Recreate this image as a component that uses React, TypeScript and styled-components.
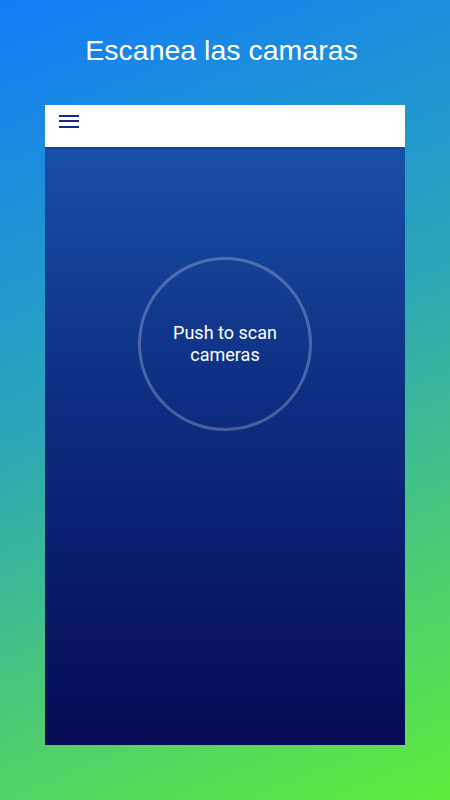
import React from "react";
import styled, { createGlobalStyle } from "styled-components";

const Global = createGlobalStyle`
  html, body { margin: 0; padding: 0; }
  body { width: 450px; height: 800px; overflow: hidden; }
  #root { height: 100%; }
`;

const Page = styled.div`
  width: 450px;
  height: 800px;
  box-sizing: border-box;
  background: linear-gradient(158deg, #117cf7 0%, #2ba6b8 45%, #4fd06c 78%, #5eec3a 100%);
  display: flex;
  flex-direction: column;
  align-items: center;
  padding-top: 33px;
`;

const Title = styled.h1`
  margin: 0;
  padding-right: 7px;
  font-family: "Liberation Sans", Arial, sans-serif;
  font-weight: 400;
  font-size: 28.5px;
  line-height: 34px;
  color: #ffffff;
`;

const Phone = styled.div`
  margin-top: 38px;
  width: 360px;
  height: 640px;
  display: flex;
  flex-direction: column;
  background: linear-gradient(180deg, #1a56ae 0%, #0e2e82 45%, #050a55 100%);
`;

const AppBar = styled.div`
  height: 42px;
  background: #ffffff;
  border-bottom: 2px solid #0f4597;
  display: flex;
  align-items: center;
  padding-left: 14px;
`;

const MenuButton = styled.button`
  border: 0;
  background: transparent;
  padding: 0;
  width: 20px;
  display: flex;
  flex-direction: column;
  gap: 3.5px;
  margin-top: -10px;
  cursor: pointer;
`;

const MenuLine = styled.span`
  display: block;
  height: 2px;
  width: 20px;
  background: #1a2a8a;
`;

const Content = styled.div`
  flex: 1;
  display: flex;
  justify-content: center;
  padding-top: 108px;
`;

const ScanCircle = styled.button`
  width: 174px;
  height: 174px;
  border-radius: 50%;
  border: 3.5px solid rgba(255, 255, 255, 0.25);
  background: transparent;
  box-sizing: border-box;
  display: flex;
  align-items: center;
  justify-content: center;
  color: #ffffff;
  font-family: Roboto, "Noto Sans", sans-serif;
  font-size: 18px;
  line-height: 22px;
  text-align: center;
  padding: 0;
  cursor: pointer;
`;

export default function App() {
  return (
    <>
      <Global />
      <Page>
        <Title>Escanea las camaras</Title>
        <Phone>
          <AppBar>
            <MenuButton aria-label="menu">
              <MenuLine />
              <MenuLine />
              <MenuLine />
            </MenuButton>
          </AppBar>
          <Content>
            <ScanCircle>
              Push to scan
              <br />
              cameras
            </ScanCircle>
          </Content>
        </Phone>
      </Page>
    </>
  );
}
